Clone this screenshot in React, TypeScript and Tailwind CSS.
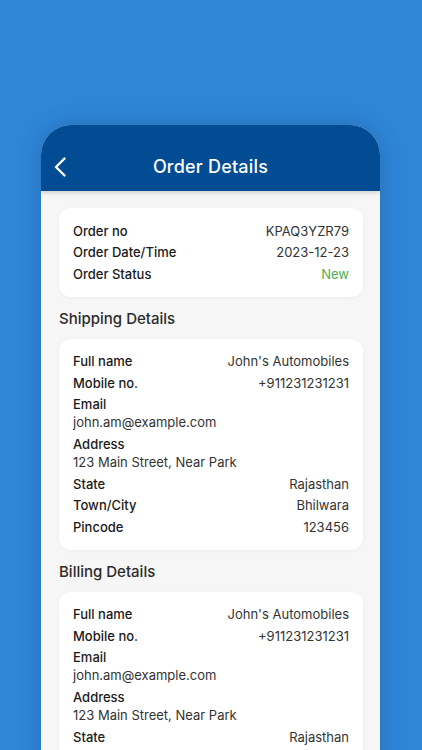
import React from "react";

type Row = { label: string; value: string; stacked?: boolean; valueClass?: string };

const orderRows: Row[] = [
  { label: "Order no", value: "KPAQ3YZR79" },
  { label: "Order Date/Time", value: "2023-12-23" },
  { label: "Order Status", value: "New", valueClass: "text-[#4caf50]" },
];

const addressRows: Row[] = [
  { label: "Full name", value: "John's Automobiles" },
  { label: "Mobile no.", value: "+911231231231" },
  { label: "Email", value: "john.am@example.com", stacked: true },
  { label: "Address", value: "123 Main Street, Near Park", stacked: true },
  { label: "State", value: "Rajasthan" },
  { label: "Town/City", value: "Bhilwara" },
  { label: "Pincode", value: "123456" },
];

function Card({ rows }: { rows: Row[] }) {
  return (
    <div className="bg-white rounded-[12px] shadow-[0_1px_4px_rgba(0,0,0,0.04)] px-[14px] pt-[13.5px] pb-[14px] flex flex-col gap-[3.6px] text-[13px] leading-[18px]">
      {rows.map((r) =>
        r.stacked ? (
          <div key={r.label} className="flex flex-col">
            <span className="font-medium text-[#1a1a1a]">{r.label}</span>
            <span className="text-[#333333]">{r.value}</span>
          </div>
        ) : (
          <div key={r.label} className="flex justify-between">
            <span className="font-medium text-[#1a1a1a]">{r.label}</span>
            <span className={r.valueClass ?? "text-[#333333]"}>{r.value}</span>
          </div>
        )
      )}
    </div>
  );
}

function SectionTitle({ children }: { children: React.ReactNode }) {
  return (
    <div className="mt-[11px] mb-[9px] text-[15px] leading-[22px] font-medium text-[#2b2b2b]">
      {children}
    </div>
  );
}

export default function App() {
  return (
    <div
      className="w-[422px] h-[750px] overflow-hidden bg-[#2e86d9] pt-[125px]"
      style={{ fontFamily: "Inter, 'Noto Sans', sans-serif" }}
    >
      <div className="ml-[41px] w-[339px] rounded-t-[30px] overflow-hidden bg-[#f6f6f6] shadow-[0_0_24px_rgba(0,0,0,0.18)] h-[700px]">
        <div className="relative h-[66px] bg-[#024c94] flex justify-center pt-[30px] shadow-[0_2px_4px_rgba(0,0,0,0.15)]">
          <svg
            className="absolute left-[12px] top-[32px]"
            width="14"
            height="20"
            viewBox="0 0 14 20"
            fill="none"
            stroke="white"
            strokeWidth="2.4"
            strokeLinecap="round"
            strokeLinejoin="round"
          >
            <path d="M11.5 1.5 L3 10 L11.5 18.5" />
          </svg>
          <span className="text-white text-[18px] leading-[24px] font-medium tracking-[0.2px]">
            Order Details
          </span>
        </div>
        <div className="pl-[18px] pt-[17px] pr-[17px]">
          <Card rows={orderRows} />
          <SectionTitle>Shipping Details</SectionTitle>
          <Card rows={addressRows} />
          <SectionTitle>Billing Details</SectionTitle>
          <Card rows={addressRows} />
        </div>
      </div>
    </div>
  );
}
